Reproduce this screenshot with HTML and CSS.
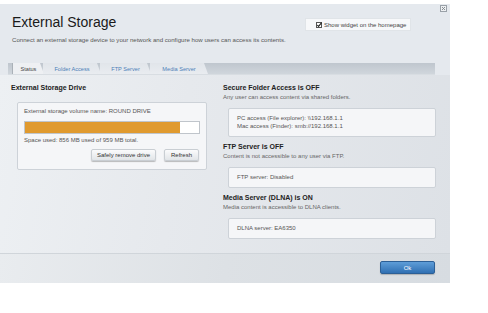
FILE: index.html
```html
<!doctype html>
<html lang="en">
<head>
    <meta charset="UTF-8">
    <title>External Storage</title>
    <link rel="stylesheet" href="styles.css">
</head>
<body>

<div class="panel">
    <span class="close">
        <svg width="7" height="7" viewBox="0 0 7 7">
            <rect x="0.5" y="0.5" width="6" height="6" fill="#eef0f2" stroke="#9aa1a8"/>
            <path d="M2 2 L5 5 M5 2 L2 5" stroke="#7d848b" stroke-width="0.9"/>
        </svg>
    </span>

    <!--头部 start-->
    <div class="top">
        <div class="top-row">
            <h1>External Storage</h1>
            <label class="widget">
                <svg width="6" height="6" viewBox="0 0 6 6">
                    <rect x="0.5" y="0.5" width="5" height="5" fill="#fff" stroke="#555"/>
                    <path d="M1.3 3 L2.6 4.4 L5.6 0.6" fill="none" stroke="#222" stroke-width="1.1"/>
                </svg>
                Show widget on the homepage
            </label>
        </div>
        <p class="desc">Connect an external storage device to your network and configure how users can access its contents.</p>
    </div>
    <!--头部 end-->

    <ul class="tabs">
        <li class="active">Status</li>
        <li class="w-folder">Folder Access</li>
        <li class="w-ftp">FTP Server</li>
        <li class="w-media">Media Server</li>
    </ul>

    <div class="content">
        <div class="col-left">
            <h3>External Storage Drive</h3>
            <div class="box drive">
                <div class="line">External storage volume name: ROUND DRIVE</div>
                <div class="bar"><div class="fill" style="width: 89%"></div></div>
                <div class="line used">Space used: 856 MB used of 959 MB total.</div>
                <div class="btns">
                    <button class="btn remove">Safely remove drive</button>
                    <button class="btn">Refresh</button>
                </div>
            </div>
        </div>
        <div class="col-right">
            <div class="section">
                <h3>Secure Folder Access is OFF</h3>
                <p>Any user can access content via shared folders.</p>
                <div class="box info">
                    <div class="line">PC access (File explorer): \\192.168.1.1</div>
                    <div class="line">Mac access (Finder): smb://192.168.1.1</div>
                </div>
            </div>
            <div class="section">
                <h3>FTP Server is OFF</h3>
                <p>Content is not accessible to any user via FTP.</p>
                <div class="box info">
                    <div class="line">FTP server: Disabled</div>
                </div>
            </div>
            <div class="section">
                <h3>Media Server (DLNA) is ON</h3>
                <p>Media content is accessible to DLNA clients.</p>
                <div class="box info">
                    <div class="line">DLNA server: EA6350</div>
                </div>
            </div>
        </div>
    </div>

    <div class="footer">
        <button class="ok">Ok</button>
    </div>
</div>

</body>
</html>
```

FILE: styles.css
```css
* {
    margin: 0;
    padding: 0;
    box-sizing: border-box;
}

ul {
    list-style: none;
}

body {
    background: #fff;
    font-family: "Liberation Sans", Arial, sans-serif;
    color: #333;
}

.panel {
    width: 450px;
    height: 279px;
    margin-top: 4px;
    position: relative;
    display: flex;
    flex-direction: column;
    background: #e5e9ee;
}

.close {
    position: absolute;
    right: 3px;
    top: 1px;
    line-height: 0;
}

.top {
    padding: 10px 39px 0 12px;
    height: 59px;
}

.top-row {
    display: flex;
    justify-content: space-between;
    align-items: flex-start;
}

.top h1 {
    font-size: 14px;
    line-height: 16px;
    font-weight: normal;
    color: #1a1a1a;
}

.widget {
    margin-top: 4px;
    width: 106px;
    height: 13px;
    background: #f7f8fa;
    border: 1px solid #e0e4e8;
    display: flex;
    align-items: center;
    gap: 2px;
    padding-left: 10px;
    font-size: 6px;
    color: #444;
}

.desc {
    margin-top: 5px;
    font-size: 6.1px;
    line-height: 8px;
    color: #555;
}

.tabs {
    height: 12px;
    margin: 0 15px 0 8px;
    padding-left: 4px;
    display: flex;
    background: linear-gradient(#bfc6ce, #d0d6dc);
    border-bottom: 1px solid #d8dde2;
}

.tabs li {
    width: 58px;
    font-size: 5.6px;
    line-height: 12px;
    text-align: center;
    color: #4b80b8;
    background: linear-gradient(#e1e5ea, #e9ecf0);
    clip-path: polygon(0 0, calc(100% - 4px) 0, 100% 100%, 0 100%);
    margin-right: -1px;
}

.tabs li.active {
    width: 32px;
    color: #444;
    background: #eef0f3;
    border-left: 1px solid #aab1b8;
}

.tabs li.w-folder {
    width: 58px;
}

.tabs li.w-ftp {
    width: 51px;
}

.content {
    flex: 1;
    display: flex;
    padding: 8px 0 0 11px;
    background: linear-gradient(100deg, #edf0f3 0%, #e6e9ed 40%, #dde1e6 100%);
}

.col-left {
    width: 212px;
}

.col-right {
    width: 213px;
}

h3 {
    font-size: 7px;
    line-height: 9px;
    font-weight: bold;
    color: #222;
}

.box {
    background: #f5f6f8;
    border: 1px solid #cdd2d8;
    border-radius: 2px;
}

.line {
    font-size: 6px;
    line-height: 8px;
    color: #555;
}

.drive {
    width: 190px;
    height: 68px;
    margin: 10px 0 0 6px;
    padding: 4px 7px 0 6px;
}

.bar {
    margin-top: 6px;
    height: 13px;
    width: 176px;
    background: #fff;
    border: 1px solid #c0c5cb;
}

.fill {
    height: 100%;
    background: #e09a2f;
}

.used {
    margin-top: 2px;
}

.btns {
    margin-top: 5px;
    display: flex;
    justify-content: flex-end;
    gap: 8px;
}

.btn {
    height: 12px;
    width: 35px;
    font-family: inherit;
    font-size: 6px;
    color: #333;
    border: 1px solid #c9ced3;
    border-radius: 2px;
    background: linear-gradient(#fbfbfc, #e2e5e8);
    box-shadow: 0 1px 1px rgba(0, 0, 0, 0.25);
}

.btn.remove {
    width: 65px;
}

.section {
    margin-bottom: 5px;
}

.section p {
    margin-top: 1px;
    font-size: 6px;
    line-height: 8px;
    color: #666;
}

.info {
    margin: 7px 0 0 5px;
    padding: 5px 8px 6px 8px;
    width: 208px;
}

.footer {
    height: 30px;
    border-top: 1px solid #d0d5da;
    background: linear-gradient(100deg, #e9ecef 0%, #dde1e5 50%, #d7dce1 100%);
    display: flex;
    justify-content: flex-end;
    align-items: flex-start;
    padding: 7px 15px 0 0;
}

.ok {
    width: 55px;
    height: 13px;
    font-family: inherit;
    font-size: 6px;
    color: #fff;
    border: 1px solid #2c5f96;
    border-radius: 2px;
    background: linear-gradient(#5e9dd8, #3070b3);
    box-shadow: 0 1px 1px rgba(0, 0, 0, 0.2);
}
```
